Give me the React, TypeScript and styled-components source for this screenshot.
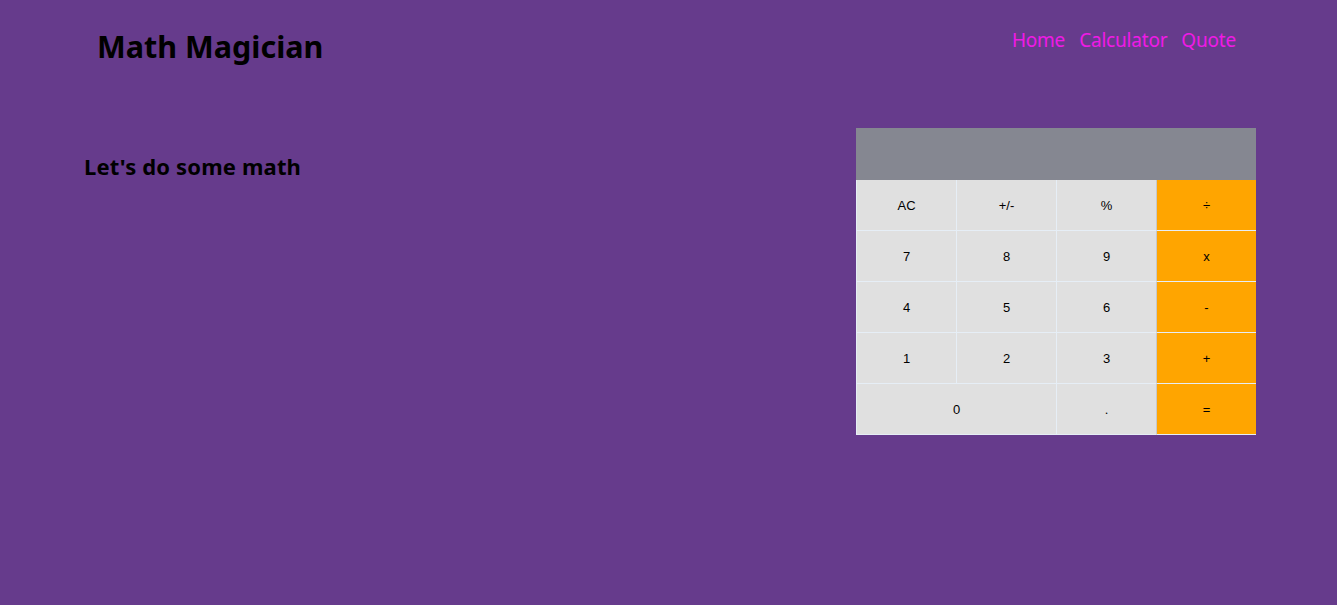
import React from 'react';
import styled, { createGlobalStyle } from 'styled-components';

const Global = createGlobalStyle`
  html, body { margin: 0; padding: 0; }
  body {
    background: #663b8c;
    font-family: "Noto Sans", "Open Sans", sans-serif;
    min-height: 605px;
  }
`;

const Page = styled.div`
  width: 1337px;
  height: 605px;
  background: #663b8c;
  box-sizing: border-box;
`;

const Header = styled.header`
  display: flex;
  justify-content: space-between;
  align-items: flex-start;
  padding: 26px 101px 0 97px;
  height: 100px;
  box-sizing: border-box;
`;

const Title = styled.h1`
  margin: 0;
  font-size: 30.5px;
  font-weight: 700;
  color: #000;
  line-height: 40px;
  letter-spacing: 0;
`;

const Nav = styled.nav`
  display: flex;
  gap: 14px;
  padding-top: 2px;
`;

const NavLink = styled.a`
  color: #f019e6;
  font-size: 19px;
  text-decoration: none;
  line-height: 24px;
  letter-spacing: -0.2px;
`;

const Main = styled.main`
  display: flex;
  justify-content: space-between;
  align-items: flex-start;
  padding: 28px 81px 0 84px;
`;

const Heading = styled.h2`
  margin: 23px 0 0;
  font-size: 22px;
  font-weight: 700;
  color: #000;
  line-height: 30px;
  letter-spacing: 0.15px;
`;

const Calculator = styled.div`
  width: 400px;
  display: grid;
  grid-template-columns: repeat(4, 100px);
`;

const Display = styled.div`
  grid-column: 1 / -1;
  height: 52px;
  background: #858791;
`;

const Key = styled.button<{ $op?: boolean; $span?: number }>`
  grid-column: span ${(p) => p.$span ?? 1};
  height: 51px;
  margin: 0;
  padding: 0;
  border: none;
  border-left: 1px solid ${(p) => (p.$op ? '#c8c8c8' : '#e6eef6')};
  border-bottom: 1px solid #e6eef6;
  background: ${(p) => (p.$op ? '#ffa500' : '#e0e0e0')};
  color: #000;
  font-family: "Liberation Sans", Arial, sans-serif;
  font-size: 13px;
  cursor: pointer;
  box-sizing: border-box;
`;

const keys: { label: string; op?: boolean; span?: number }[] = [
  { label: 'AC' }, { label: '+/-' }, { label: '%' }, { label: '÷', op: true },
  { label: '7' }, { label: '8' }, { label: '9' }, { label: 'x', op: true },
  { label: '4' }, { label: '5' }, { label: '6' }, { label: '-', op: true },
  { label: '1' }, { label: '2' }, { label: '3' }, { label: '+', op: true },
  { label: '0', span: 2 }, { label: '.' }, { label: '=', op: true },
];

export default function App() {
  return (
    <Page>
      <Global />
      <Header>
        <Title>Math Magician</Title>
        <Nav>
          <NavLink href="#">Home</NavLink>
          <NavLink href="#">Calculator</NavLink>
          <NavLink href="#">Quote</NavLink>
        </Nav>
      </Header>
      <Main>
        <Heading>Let's do some math</Heading>
        <Calculator>
          <Display />
          {keys.map((k) => (
            <Key key={k.label} $op={k.op} $span={k.span}>
              {k.label}
            </Key>
          ))}
        </Calculator>
      </Main>
    </Page>
  );
}
